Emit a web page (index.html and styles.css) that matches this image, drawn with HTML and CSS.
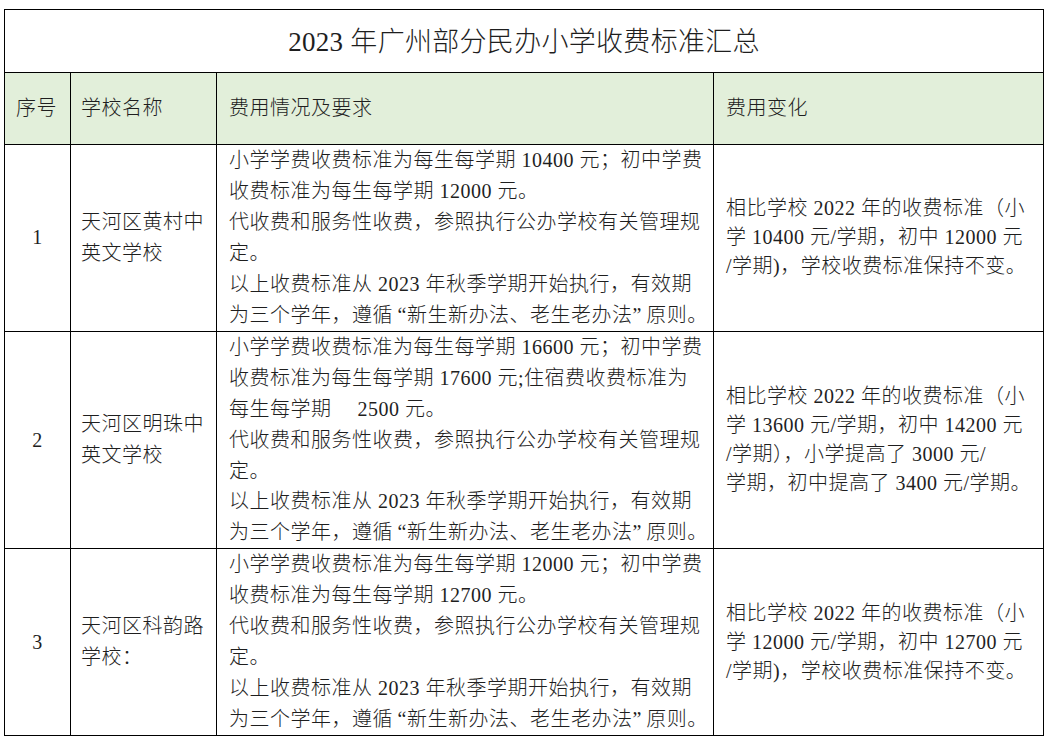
FILE: index.html
```html
<!DOCTYPE html>
<html lang="zh-CN">
<head>
<meta charset="utf-8">
<title>2023年广州部分民办小学收费标准汇总</title>
<link rel="stylesheet" href="styles.css">
</head>
<body>
<table class="fee-table">
  <colgroup>
    <col class="c-no">
    <col class="c-name">
    <col class="c-detail">
    <col class="c-change">
  </colgroup>
  <thead>
    <tr class="title-row">
      <th colspan="4" class="title">2023 年广州部分民办小学收费标准汇总</th>
    </tr>
    <tr class="head-row">
      <th class="no-head">序号</th>
      <th class="name">学校名称</th>
      <th class="detail">费用情况及要求</th>
      <th class="change">费用变化</th>
    </tr>
  </thead>
  <tbody>
    <tr>
      <td class="no">1</td>
      <td class="name">天河区黄村中<br>英文学校</td>
      <td class="detail">
        <p>小学学费收费标准为每生每学期 10400 元；初中学费<br>收费标准为每生每学期 12000 元。</p>
        <p>代收费和服务性收费，参照执行公办学校有关管理规<br>定。</p>
        <p>以上收费标准从 2023 年秋季学期开始执行，有效期<br>为三个学年，遵循&thinsp;“新生新办法、老生老办法”&thinsp;原则。</p>
      </td>
      <td class="change">相比学校 2022 年的收费标准（小<br>学 10400 元/学期，初中 12000 元<br>/学期)，学校收费标准保持不变。</td>
    </tr>
    <tr>
      <td class="no">2</td>
      <td class="name">天河区明珠中<br>英文学校</td>
      <td class="detail">
        <p>小学学费收费标准为每生每学期 16600 元；初中学费<br>收费标准为每生每学期 17600 元;住宿费收费标准为<br>每生每学期&emsp; 2500 元。</p>
        <p>代收费和服务性收费，参照执行公办学校有关管理规<br>定。</p>
        <p>以上收费标准从 2023 年秋季学期开始执行，有效期<br>为三个学年，遵循&thinsp;“新生新办法、老生老办法”&thinsp;原则。</p>
      </td>
      <td class="change">相比学校 2022 年的收费标准（小<br>学 13600 元/学期，初中 14200 元<br>/学期），小学提高了 3000 元/<br>学期，初中提高了 3400 元/学期。</td>
    </tr>
    <tr>
      <td class="no">3</td>
      <td class="name">天河区科韵路<br>学校：</td>
      <td class="detail">
        <p>小学学费收费标准为每生每学期 12000 元；初中学费<br>收费标准为每生每学期 12700 元。</p>
        <p>代收费和服务性收费，参照执行公办学校有关管理规<br>定。</p>
        <p>以上收费标准从 2023 年秋季学期开始执行，有效期<br>为三个学年，遵循&thinsp;“新生新办法、老生老办法”&thinsp;原则。</p>
      </td>
      <td class="change">相比学校 2022 年的收费标准（小<br>学 12000 元/学期，初中 12700 元<br>/学期)，学校收费标准保持不变。</td>
    </tr>
  </tbody>
</table>
</body>
</html>
```
FILE: styles.css
```css
html, body {
  background: #ffffff;
}
body {
  margin: 9px 0 0 4px;
  font-family: "Liberation Serif", "Noto Sans CJK SC", serif;
  color: #1e1e1e;
}
.fee-table {
  border-collapse: collapse;
  table-layout: fixed;
  width: 1039px;
  border: 1px solid #000;
}
.c-no { width: 66px; }
.c-name { width: 146px; }
.c-detail { width: 497px; }
.c-change { width: 330px; }

.fee-table th,
.fee-table td {
  border: 1px solid #000;
  padding: 0;
  font-size: 20px;
  letter-spacing: 0.5px;
  font-weight: 300;
  line-height: 30.95px;
  white-space: nowrap;
  vertical-align: middle;
  text-align: left;
}
.fee-table .title-row th.title {
  height: 61px;
  font-size: 27px;
  letter-spacing: 0.3px;
  text-align: center;
  font-weight: 300;
  line-height: 30px;
  padding-top: 1px;
}
.head-row th {
  height: 71px;
  background: #e2efda;
}
.fee-table .no-head { padding-left: 11px; }
.fee-table .name { padding-left: 10px; }
.fee-table .detail { padding-left: 12px; }
.fee-table .change { padding-left: 12px; }
.fee-table td.no {
  text-align: center;
  padding-left: 0;
}
.fee-table td.change {
  line-height: 29px;
}
.detail p {
  margin: 0;
}
```
